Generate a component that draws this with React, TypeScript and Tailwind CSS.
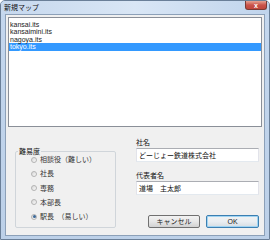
import { useState } from "react";

const files = ["kansai.its", "kansaimini.its", "nagoya.its", "tokyo.its"];
const levels = ["相談役（難しい）", "社長", "専務", "本部長", "駅長　（易しい）"];

const jp = "font-['Noto_Sans_CJK_JP','Noto_Sans',sans-serif]";

function Radio({ checked }: { checked: boolean }) {
  return (
    <span className="w-[6px] h-[6px] rounded-full border border-[#b4b4b4] bg-gradient-to-br from-[#d8d8d8] to-[#fafafa] flex items-center justify-center shrink-0">
      {checked && (
        <span className="w-[3px] h-[3px] rounded-full bg-[#3d6a99]" />
      )}
    </span>
  );
}

export default function App() {
  const [selected, setSelected] = useState(3);
  const [level, setLevel] = useState(4);

  return (
    <div
      className={`w-[270px] h-[240px] flex flex-col border border-[#6a7f98] rounded-t-[5px] bg-gradient-to-b from-[#c4d7ee] to-[#bcd0e8] ${jp} text-[7px] text-[#111]`}
    >
      {/* title bar */}
      <div className="h-[13px] flex items-start justify-between bg-gradient-to-r from-[#c6d8ee] via-[#d9e6f5] to-[#c0d4ec] rounded-t-[4px]">
        <span className="pl-[3px] pt-[2px] leading-[9px]">新規マップ</span>
        <div className="w-[22px] h-[9px] mr-[2px] rounded-b-[3px] border border-t-0 border-[#7a3a34] bg-gradient-to-b from-[#e5a293] via-[#c9524a] to-[#c0463c] flex items-center justify-center">
          <span className="text-white text-[7px] leading-none font-bold font-['Liberation_Sans',sans-serif]">x</span>
        </div>
      </div>

      {/* client area */}
      <div className="flex-1 ml-[4px] mr-[4px] mb-[3px] border border-[#8ca0b8] bg-[#f0f0f0] flex flex-col">
        <ul className="mt-[2px] mx-[2px] h-[110px] border border-[#8a8f98] bg-white pt-[3px] font-['Liberation_Sans',sans-serif]">
          {files.map((f, i) => (
            <li
              key={f}
              onClick={() => setSelected(i)}
              className={`h-[7.4px] leading-[7.4px] pl-[1px] ${
                selected === i ? "bg-[#3399ff] text-white" : "text-[#222]"
              }`}
            >
              {f}
            </li>
          ))}
        </ul>

        <div className="flex pl-[9px]">
          <fieldset className="mt-[20px] w-[101px] border border-[#d0d5da] rounded-[2px] pb-[4px]">
            <legend className="ml-[2px] leading-[8px] px-[1px]">難易度</legend>
            <div className="flex flex-col gap-[5.25px] pl-[15px] text-[#333]">
              {levels.map((l, i) => (
                <label
                  key={l}
                  onClick={() => setLevel(i)}
                  className="h-[9px] flex items-center gap-[3px] leading-[9px]"
                >
                  <Radio checked={level === i} />
                  <span>{l}</span>
                </label>
              ))}
            </div>
          </fieldset>

          <div className="ml-[20px] w-[123px] flex flex-col">
            <span className="mt-[10px] leading-[10px]">社名</span>
            <div className="mt-[1px] h-[14px] border border-[#abadb3] border-l-[#e2e3ea] border-r-[#e2e3ea] border-b-[#e3e9ef] bg-white px-[2px] leading-[12px]">
              どーじょー鉄道株式会社
            </div>
            <span className="mt-[8px] leading-[10px]">代表者名</span>
            <div className="mt-[1px] h-[14px] border border-[#abadb3] border-l-[#e2e3ea] border-r-[#e2e3ea] border-b-[#e3e9ef] bg-white px-[2px] leading-[12px]">
              道場　主太郎
            </div>
            <div className="mt-[20px] flex gap-[6px] pl-[12px]">
              <button className="w-[52px] h-[13px] rounded-[2px] border border-[#707070] bg-gradient-to-b from-[#f2f2f2] via-[#e6e6e6] to-[#d2d2d2] text-[7px] leading-[11px] text-[#222]">
                キャンセル
              </button>
              <button className="w-[53px] h-[13px] rounded-[2px] border border-[#3c7fb1] ring-1 ring-inset ring-[#9fd4f3] bg-gradient-to-b from-[#f2f2f2] via-[#e9eef2] to-[#d6dde3] text-[7px] leading-[11px] text-[#222] font-['Liberation_Sans',sans-serif]">
                OK
              </button>
            </div>
          </div>
        </div>
      </div>
    </div>
  );
}
